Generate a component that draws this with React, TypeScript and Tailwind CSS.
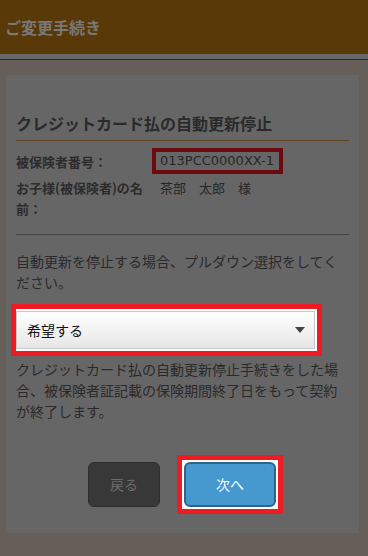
const FONT = {
  fontFamily: '"Noto Sans CJK JP", "Noto Sans", sans-serif',
};

export default function App() {
  return (
    <div
      className="w-[368px] h-[556px] bg-[#665e58] overflow-hidden"
      style={FONT}
    >
      {/* Header */}
      <div className="h-[54px] bg-[#5a3908] flex items-center pl-[5px]">
        <h1 className="text-[16px] leading-[20px] font-bold text-[#787878]">
          ご変更手続き
        </h1>
      </div>
      <div className="h-[5px] bg-[#686868]" />
      <div className="h-px bg-[#3a2808]" />

      {/* Card */}
      <div className="mt-[15px] mx-[6px] w-[353px] h-[458px] bg-[#666666] px-[10px] pt-[36px]">
        <h2 className="text-[16px] leading-[24px] font-bold text-[#2a2a2a] pb-[5px] border-b border-[#5e4220]">
          クレジットカード払の自動更新停止
        </h2>

        {/* Info rows */}
        <div className="mt-[7px] flex items-center">
          <div className="w-[136px] text-[13px] leading-[21px] font-bold text-[#2c2c2c]">
            被保険者番号：
          </div>
          <div
            className="w-[131px] border-[4px] border-[#6c0a0e] h-[26px] pl-[4px] flex items-center text-[13px] leading-[18px] text-[#262626]"
            style={{ fontFamily: '"DejaVu Sans", sans-serif' }}
          >
            013PCC0000XX-1
          </div>
        </div>
        <div className="mt-[3px] flex">
          <div className="w-[136px] text-[13px] leading-[21px] font-bold text-[#2c2c2c]">
            お子様(被保険者)の名前：
          </div>
          <div className="pl-[8px] text-[13px] leading-[21px] text-[#262626] whitespace-pre">
            茶部　太郎　様
          </div>
        </div>

        <div className="mt-[15px] h-px bg-[#444444]" />

        <p className="mt-[16px] text-[14px] leading-[21px] text-[#2a2a2a]">
          自動更新を停止する場合、プルダウン選択をしてください。
        </p>

        {/* Highlighted select */}
        <div className="mt-[11px] -ml-[5px] w-[311px] border-[5px] border-[#ed1c24] bg-white pt-[2px] pr-[2px] pb-[2px] relative z-10">
          <div className="h-[38px] border border-[#c8c8c8] bg-gradient-to-b from-white to-[#e6e6e6] flex items-center justify-between pl-[10px] pr-[9px]">
            <span className="text-[14px] leading-[20px] text-[#111111]">
              希望する
            </span>
            <svg width="10" height="6" viewBox="0 0 10 6">
              <path d="M0 0 H10 L5 6 Z" fill="#444444" />
            </svg>
          </div>
        </div>

        <p className="mt-[3px] text-[14px] leading-[21px] text-[#2a2a2a]">
          クレジットカード払の自動更新停止手続きをした場合、被保険者証記載の保険期間終了日をもって契約が終了します。
        </p>

        {/* Buttons */}
        <div className="mt-[33px] flex items-center ml-[72px] gap-[17px]">
          <button className="w-[72px] h-[45px] rounded-[6px] bg-[#383838] border border-[#2e2e2e] text-[14px] text-[#6a6a6a]">
            戻る
          </button>
          <div className="border-[5px] border-[#ed1c24] bg-white p-[2px]">
            <button className="w-[92px] h-[45px] rounded-[6px] bg-[#4699cf] border-2 border-[#2e6488] text-[14px] text-white">
              次へ
            </button>
          </div>
        </div>
      </div>
    </div>
  );
}
